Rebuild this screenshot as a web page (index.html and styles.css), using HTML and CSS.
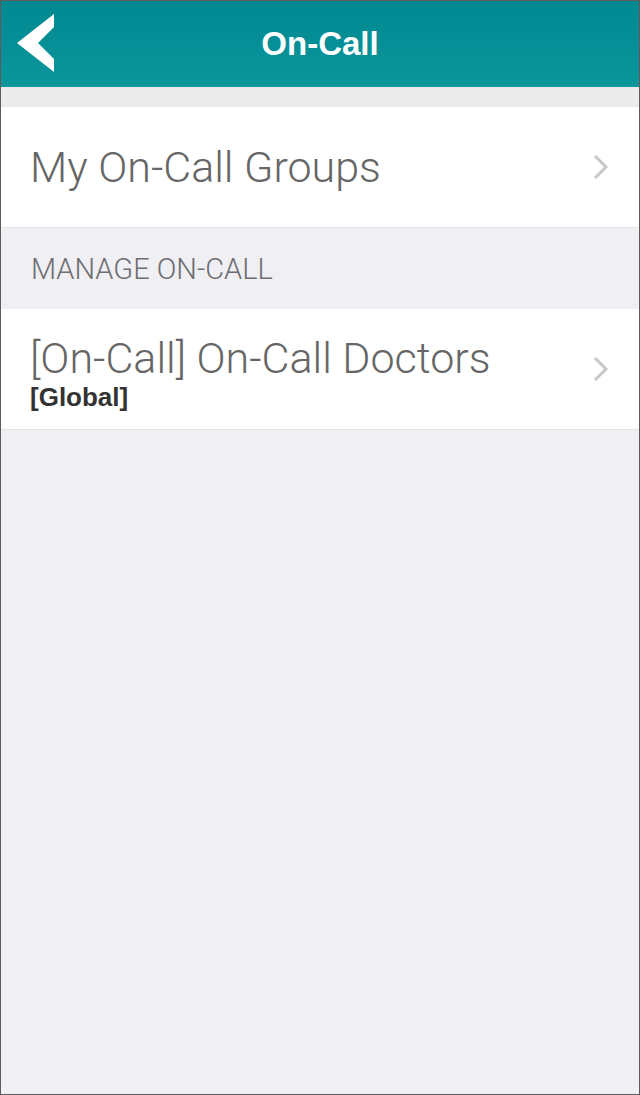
FILE: index.html
```html
<!DOCTYPE html>
<html lang="en">
<head>
    <meta charset="UTF-8">
    <meta name="viewport" content="width=device-width, initial-scale=1.0">
    <title>On-Call</title>
    <link rel="stylesheet" href="styles.css">
</head>
<body>

<div class="screen">
    <header class="nav-bar">
        <a class="back" href="#">
            <svg width="40" height="60" viewBox="0 0 40 60">
                <polygon points="37,0 37,13 21,29 37,45 37,58 0,29" fill="#ffffff"/>
            </svg>
        </a>
        <h1>On-Call</h1>
    </header>

    <div class="spacer"></div>

    <ul class="table-list">
        <li class="cell">
            <div class="cell-text">
                <span class="cell-title">My On-Call Groups</span>
            </div>
            <svg class="chevron" width="16" height="26" viewBox="0 0 16 26">
                <polyline points="2,2 13,13 2,24" fill="none" stroke="#c7c7cc" stroke-width="3"/>
            </svg>
        </li>
    </ul>

    <h2 class="section-header">MANAGE ON-CALL</h2>

    <ul class="table-list">
        <li class="cell">
            <div class="cell-text">
                <span class="cell-title cell-title-top">[On-Call] On-Call Doctors</span>
                <span class="cell-subtitle">[Global]</span>
            </div>
            <svg class="chevron" width="16" height="26" viewBox="0 0 16 26">
                <polyline points="2,2 13,13 2,24" fill="none" stroke="#c7c7cc" stroke-width="3"/>
            </svg>
        </li>
    </ul>
</div>

</body>
</html>
```

FILE: styles.css
```css
/* General Reset */
body {
    margin: 0;
    font-family: "Liberation Sans", Arial, sans-serif;
    background-color: #ffffff;
}

ul {
    list-style: none;
    margin: 0;
    padding: 0;
}

/* Screen Frame */
.screen {
    box-sizing: border-box;
    width: 640px;
    height: 1095px;
    border: 1px solid #5c5c5c;
    background-color: #efeff4;
    overflow: hidden;
}

/* Navigation Bar */
.nav-bar {
    position: relative;
    display: flex;
    align-items: center;
    justify-content: center;
    height: 86px;
    background: linear-gradient(to bottom, #008890, #0b969c);
}

.nav-bar h1 {
    margin: 0;
    color: #ffffff;
    font-weight: bold;
    font-size: 33px;
}

.back {
    position: absolute;
    left: 16px;
    top: 13px;
    display: block;
    height: 60px;
}

.spacer {
    height: 20px;
    background-color: #ebebeb;
}

/* Table Cells */
.cell {
    display: flex;
    align-items: center;
    justify-content: space-between;
    height: 120px;
    padding: 0 30px 0 29px;
    background-color: #ffffff;
    border-bottom: 1px solid #e3e3e6;
}

.cell-text {
    display: flex;
    flex-direction: column;
}

.cell-title {
    color: #666666;
    font-family: Roboto, "Liberation Sans", sans-serif;
    font-weight: 300;
    font-size: 43px;
    line-height: 48px;
}

.cell-title-top {
    line-height: 56px;
}

.cell-subtitle {
    color: #333333;
    font-weight: bold;
    font-size: 26px;
    line-height: 22px;
}

.chevron {
    flex-shrink: 0;
}

/* Section Header */
.section-header {
    display: flex;
    align-items: center;
    height: 81px;
    margin: 0;
    padding: 0 30px;
    color: #6d6d72;
    font-family: Roboto, "Liberation Sans", sans-serif;
    font-weight: 300;
    font-size: 29px;
}
```
